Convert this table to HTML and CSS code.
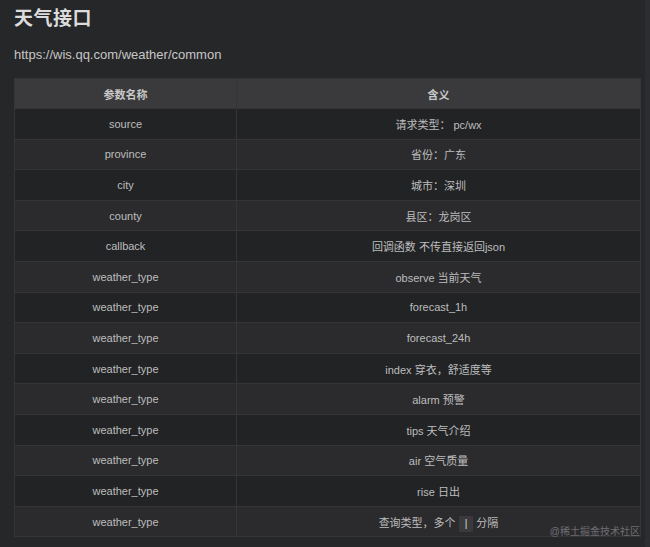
FILE: index.html
```html
<!DOCTYPE html>
<html lang="zh">
<head>
<meta charset="utf-8">
<link rel="stylesheet" href="styles.css">
</head>
<body>
<div class="page">
  <h1 class="title">天气接口</h1>
  <p class="url">https://wis.qq.com/weather/common</p>
  <table class="params">
    <thead>
      <tr><th class="c1">参数名称</th><th>含义</th></tr>
    </thead>
    <tbody>
      <tr><td>source</td><td>请求类型： pc/wx</td></tr>
      <tr><td>province</td><td>省份：广东</td></tr>
      <tr><td>city</td><td>城市：深圳</td></tr>
      <tr><td>county</td><td>县区：龙岗区</td></tr>
      <tr><td>callback</td><td>回调函数 不传直接返回json</td></tr>
      <tr><td>weather_type</td><td>observe 当前天气</td></tr>
      <tr><td>weather_type</td><td>forecast_1h</td></tr>
      <tr><td>weather_type</td><td>forecast_24h</td></tr>
      <tr><td>weather_type</td><td>index 穿衣，舒适度等</td></tr>
      <tr><td>weather_type</td><td>alarm 预警</td></tr>
      <tr><td>weather_type</td><td>tips 天气介绍</td></tr>
      <tr><td>weather_type</td><td>air 空气质量</td></tr>
      <tr><td>weather_type</td><td>rise 日出</td></tr>
      <tr><td>weather_type</td><td>查询类型，多个 <code class="code">|</code> 分隔</td></tr>
    </tbody>
  </table>
  <div class="scrollbar"></div>
  <div class="watermark">@稀土掘金技术社区</div>
</div>
</body>
</html>
```
FILE: styles.css
```css
html, body {
  margin: 0;
  padding: 0;
  background: #262729;
}
body {
  width: 650px;
  height: 547px;
  overflow: hidden;
  font-family: "Liberation Sans", "Noto Sans CJK SC", sans-serif;
  color: #c4c4c4;
}
.page {
  position: relative;
  padding: 6px 9px 0 14px;
  height: 547px;
  box-sizing: border-box;
}
.title {
  margin: 0;
  font-size: 19px;
  line-height: 26px;
  font-weight: bold;
  color: #dcdcdc;
  letter-spacing: 0.5px;
}
.url {
  margin: 15px 0 0 0;
  font-size: 13px;
  line-height: 16px;
  color: #c6c6c6;
}
.params {
  margin-top: 15px;
  width: 627px;
  border-collapse: collapse;
  font-size: 11px;
  table-layout: fixed;
}
.params th, .params td {
  border: 1px solid #353538;
  text-align: center;
  height: 30.6px;
  padding: 0 6px;
  box-sizing: border-box;
  color: #bdbdbd;
}
.params th {
  background: #3a3a3c;
  font-weight: bold;
  height: 30px;
  color: #c8c8c8;
}
.params th.c1 {
  width: 222px;
}
.params tbody tr:nth-child(odd) td {
  background: #222325;
}
.params tbody tr:nth-child(even) td {
  background: #2b2b2e;
}
.code {
  font-family: "Liberation Mono", monospace;
  background: #3a3a3d;
  padding: 2px 4px;
  font-size: 11px;
  color: #cfcfcf;
}
.scrollbar {
  position: absolute;
  top: 0;
  right: 0;
  width: 5px;
  height: 547px;
  background: #2c2d30;
}
.watermark {
  position: absolute;
  right: 10px;
  bottom: 9px;
  font-size: 10px;
  color: #6e6e72;
}
```
